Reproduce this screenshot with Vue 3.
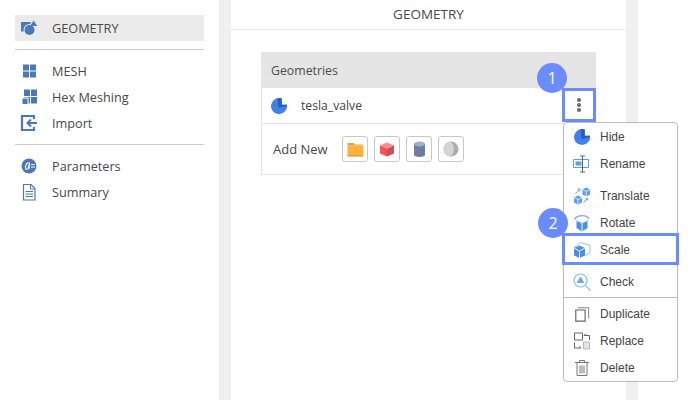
<script setup>
const pieBody = 'M11 .6 A8 8 0 1 0 15.900 6.500 L11 6.500 Z'
const pieDark = 'M6.500 .2 A8 8 0 0 1 10.500 .4 L10.500 7 L15.900 7 L16 8 L7.500 10 Z'
</script>

<template>
  <div class="page">
    <aside class="side">
      <div class="nav active">
        <svg class="ni" width="18" height="16" viewBox="0 0 18 16">
          <path d="M1 2h9.500v9.500H1z" fill="#4a7ab5"/>
          <circle cx="9.500" cy="10" r="6" fill="#ebebeb"/>
          <circle cx="9.500" cy="10" r="5" fill="#4a7ab5"/>
          <path d="M13.500 0.500l3.800 5.500h-7z" fill="#4a7ab5"/>
        </svg>
        <span>GEOMETRY</span>
      </div>
      <hr class="rule">
      <div class="nav">
        <svg class="ni" width="18" height="16" viewBox="0 0 18 16">
          <path d="M3 1.500h6v6H3zM10 1.500h6v6h-6zM3 8.500h6v6H3zM10 8.500h6v6h-6z" fill="#4a7ab5"/>
        </svg>
        <span>MESH</span>
      </div>
      <div class="nav">
        <svg class="ni" width="18" height="16" viewBox="0 0 18 16">
          <path d="M4 0.500h6v6.500H4zM11 0.500h6v6.500h-6zM11 8h6v6.500h-6zM4 8h6v6.500H4z" fill="#4a7ab5"/>
          <path d="M2 9h6v6.500H2z" fill="#4a7ab5" stroke="#fff"/>
        </svg>
        <span>Hex Meshing</span>
      </div>
      <div class="nav">
        <svg class="ni" width="18" height="18" viewBox="0 0 18 18">
          <path d="M14 5V2H2v14h12v-3" fill="none" stroke="#4a7ab5" stroke-width="2.200"/>
          <path d="M17 9H8M11 5.500L7.500 9l3.500 3.500" fill="none" stroke="#4a7ab5" stroke-width="2"/>
        </svg>
        <span>Import</span>
      </div>
      <hr class="rule">
      <div class="nav">
        <svg class="ni" width="18" height="16" viewBox="0 0 18 16">
          <circle cx="9" cy="8" r="7.500" fill="#4a7ab5"/>
          <path d="M8.500 4.500C5.500 5 4.500 11.500 6.500 11.500c1.500 0 2.500-4 3-7l-.5 6.500" fill="none" stroke="#fff" stroke-width="1.100"/>
          <path d="M11 6.500h4M11 9h4" stroke="#fff"/>
        </svg>
        <span>Parameters</span>
      </div>
      <div class="nav">
        <svg class="ni" width="18" height="18" viewBox="0 0 18 18">
          <path d="M3.500 1.500h7.500l4 4v11.500H3.500z" fill="none" stroke="#4a7ab5" stroke-width="1.200"/>
          <path d="M10.500 1.500v4.500H15M5.500 8.500h7.500M5.500 11h7.500M5.500 13.500h7.500" fill="none" stroke="#4a7ab5"/>
        </svg>
        <span>Summary</span>
      </div>
    </aside>

    <main class="panel">
      <h1 class="title">GEOMETRY</h1>
      <section class="card">
        <header class="card-head">Geometries</header>
        <div class="geo-row">
          <svg class="pie" width="16" height="16" viewBox="0 0 16 16">
            <path :d="pieBody" fill="#3f80ea"/>
            <path :d="pieDark" fill="#2a5cb4"/>
          </svg>
          <span class="geo-name">tesla_valve</span>
          <button class="kebab" type="button" aria-label="More"><i></i><i></i><i></i></button>
          <span class="badge badge-one">1</span>
        </div>
        <div class="add-row">
          <span class="add-label">Add New</span>
          <button class="tool" type="button" aria-label="Folder">
            <svg width="17" height="15" viewBox="0 0 17 15">
              <path d="M0.500 2.500V1h6l1.500 1.500h8v1H.5z" fill="#e0a23c"/>
              <path d="M0.500 3.500h16v10.500H.5z" fill="#ffb13d"/>
              <path d="M0.500 13.500h16V14.500H.5z" fill="#d28c25"/>
            </svg>
          </button>
          <button class="tool" type="button" aria-label="Box">
            <svg width="16" height="15" viewBox="0 0 16 15">
              <path d="M8 0.500l7 3-7 3.300-7-3.300z" fill="#ff8a8e"/>
              <path d="M1 3.500l7 3.300V14.500L1 11.500z" fill="#fa5158"/>
              <path d="M15 3.500L8 6.800V14.500l7-3z" fill="#c05458"/>
            </svg>
          </button>
          <button class="tool" type="button" aria-label="Cylinder">
            <svg width="13" height="17" viewBox="0 0 13 17">
              <path d="M1 3v11c0 2.500 11 2.500 11 0V3z" fill="#6d7f9c"/>
              <ellipse cx="6.500" cy="3" rx="5.500" ry="2.500" fill="#9cb1d0"/>
            </svg>
          </button>
          <button class="tool" type="button" aria-label="Sphere">
            <svg width="16" height="16" viewBox="0 0 16 16">
              <circle cx="8" cy="8" r="7.500" fill="#adadad"/>
              <path d="M8 .5A7.500 7.500 0 0 0 8 15.500A11 11 0 0 0 8 .5z" fill="#d4d4d4"/>
            </svg>
          </button>
        </div>
      </section>

      <div class="menu">
        <div class="item">
          <svg width="18" height="18" viewBox="-1 -1 18 18">
            <path :d="pieBody" fill="#3f80ea"/>
            <path :d="pieDark" fill="#2a5cb4"/>
          </svg>
          <span>Hide</span>
        </div>
        <div class="item">
          <svg width="18" height="18" viewBox="0 0 18 18">
            <path d="M.5 4.500h15v8H.5z" fill="none" stroke="#5b9cf0"/>
            <path d="M2.500 6.500h6v4h-6z" fill="#5b9cf0"/>
            <path d="M9.500 1v16M7 1h5M7 17h5" fill="none" stroke="#666"/>
          </svg>
          <span>Rename</span>
        </div>
        <div class="item gap">
          <svg width="18" height="18" viewBox="0 0 18 18">
            <path d="M9.500 2.500l3.700-2 3.800 2v5l-3.800 2-3.700-2zM1 10.500l4-2 4 2v5l-4 2-4-2z" fill="#5b9cf0"/>
            <path d="M9.500 2.500l3.700 2 3.800-2M13.200 4.500v5M1 10.500l4 2 4-2M5 12.500v5" fill="none" stroke="#fff" stroke-width=".8"/>
            <path d="M2.500 6.500L7 2M4.500 2H7v2.500M10.500 15.500l4-4M14.500 13.500v-2h-2" fill="none" stroke="#5b9cf0" stroke-width=".9"/>
          </svg>
          <span>Translate</span>
        </div>
        <div class="item">
          <svg width="18" height="18" viewBox="0 0 18 18">
            <path d="M3.500 6l5.500 2.500L14.500 6v8l-5.500 3.500-5.500-3.500z" fill="#4a8fe6"/>
            <path d="M3.500 6.500L9 9l5.500-2.500M9 9v8" fill="none" stroke="#fff" stroke-width=".9"/>
            <path d="M1.500 5.500C3 1 13.500 0 16 5" fill="none" stroke="#7ab0ee" stroke-width="1.400"/>
          </svg>
          <span>Rotate</span>
        </div>
        <div class="item scale">
          <svg width="18" height="18" viewBox="0 0 18 18">
            <path d="M1 7l5.500-2.500L12 7v7.500L6.500 17 1 14.500z" fill="#4a8fe6"/>
            <path d="M1 7l5.500 3L12 7M6.500 10v7" fill="none" stroke="#fff" stroke-width=".9"/>
            <path d="M1 7l6.500-5.500L17 4.500v7L12 15" fill="none" stroke="#7ab0ee" stroke-width=".8"/>
          </svg>
          <span>Scale</span>
          <span class="badge badge-two">2</span>
        </div>
        <div class="item gap">
          <svg width="18" height="18" viewBox="0 0 18 18">
            <circle cx="7.500" cy="7.500" r="6.500" fill="none" stroke="#8abcf7" stroke-width="1.200"/>
            <path d="M7.500 3.500l4 6.500h-8z" fill="#6ba6f2"/>
            <path d="M12.500 12.500l5 5" stroke="#8abcf7" stroke-width="1.200"/>
          </svg>
          <span>Check</span>
        </div>
        <hr class="menu-rule">
        <div class="item">
          <svg width="16" height="16" viewBox="-1 -1 18 18">
            <path d="M1 3.500h10.500V16H1z" fill="none" stroke="#666" stroke-width="1.300"/>
            <path d="M3.500 1h12v12" fill="none" stroke="#777"/>
          </svg>
          <span>Duplicate</span>
        </div>
        <div class="item">
          <svg width="18" height="18" viewBox="0 0 18 18">
            <path d="M1.500 1h8v7h-8z" fill="none" stroke="#666"/>
            <path d="M10.500 10h6v7h-6z" fill="#e4e4e4" stroke="#bbb"/>
            <path d="M11 3.500h5.500V8M11 3.500l2-2M1.500 10.500V16H8M8 16l-2-1.500" fill="none" stroke="#666"/>
          </svg>
          <span>Replace</span>
        </div>
        <div class="item">
          <svg width="14" height="16" viewBox="0 0 14 16">
            <path d="M0 2.500h14M4.500 2.500V.5h5v2M2 3v12.500h10V3M5 5.500v8M7 5.500v8M9 5.500v8" fill="none" stroke="#777"/>
          </svg>
          <span>Delete</span>
        </div>
      </div>
    </main>
  </div>
</template>

<style scoped>
.page {
  display: flex;
  width: 700px;
  height: 400px;
  overflow: hidden;
  background: #fff;
  color: #444;
}
.side {
  box-sizing: border-box;
  width: 219px;
  padding: 15px 15px 0;
  font: 12.700px "Open Sans", sans-serif;
}
.nav {
  display: flex;
  align-items: center;
  height: 26px;
  padding-left: 5px;
  gap: 14px;
  color: #484848;
}
.nav.active {
  background: #ebebeb;
}
.ni {
  flex: none;
  width: 18px;
}
.rule {
  height: 1px;
  margin: 8px 0;
  border: 0;
  background: #ccc;
}
.panel {
  position: relative;
  box-sizing: border-box;
  width: 419px;
  height: 400px;
  border-left: 12px solid #f0f0f0;
  border-right: 12px solid #f0f0f0;
  font-family: "Open Sans", sans-serif;
}
.title {
  box-sizing: border-box;
  height: 30px;
  margin: 0;
  border-bottom: 1px solid #e4e4e4;
  text-align: center;
  font-size: 13.500px;
  font-weight: 400;
  line-height: 28px;
  color: #484848;
}
.card {
  margin: 22px 30px 0;
  border-left: 1px solid #e5e5e5;
}
.card-head {
  box-sizing: border-box;
  height: 36px;
  padding-left: 9px;
  background: #e5e5e5;
  font-size: 12.300px;
  line-height: 37px;
  color: #4d4d4d;
}
.geo-row {
  position: relative;
  display: flex;
  box-sizing: border-box;
  align-items: center;
  height: 36px;
  padding-left: 9px;
  border-bottom: 1px solid #e5e5e5;
  font-size: 12.200px;
}
.pie {
  flex: none;
}
.geo-name {
  margin-left: 14px;
  color: #444;
}
.kebab {
  display: flex;
  flex-direction: column;
  align-items: center;
  justify-content: center;
  gap: 1.700px;
  box-sizing: border-box;
  width: 34px;
  height: 34px;
  margin-left: auto;
  align-self: flex-start;
  padding: 0;
  border: 3px solid #6a8cff;
  background: #fff;
}
.kebab i {
  width: 3.600px;
  height: 3.600px;
  border-radius: 50%;
  background: #707070;
}
.add-row {
  display: flex;
  align-items: center;
  box-sizing: border-box;
  height: 51px;
  padding-left: 11px;
  gap: 6px;
  border-bottom: 1px solid #e5e5e5;
}
.add-label {
  width: 63px;
  font-size: 13px;
  color: #484848;
}
.tool {
  display: flex;
  align-items: center;
  justify-content: center;
  box-sizing: border-box;
  width: 26px;
  height: 26px;
  padding: 0;
  border: 1px solid #c8c8c8;
  border-radius: 3px;
  background: #fff;
}
.badge {
  position: absolute;
  display: flex;
  align-items: center;
  justify-content: center;
  box-sizing: border-box;
  width: 30px;
  height: 30px;
  border-radius: 50%;
  background: #6a8cff;
  color: #fff;
  font: 16px "Open Sans", sans-serif;
  z-index: 3;
}
.badge-one {
  top: -25px;
  right: 29px;
}
.badge-two {
  top: -28px;
  left: -26px;
}
.menu {
  position: absolute;
  top: 122px;
  left: 332px;
  box-sizing: border-box;
  width: 115px;
  height: 260px;
  border: 1px solid #bbb;
  border-radius: 4px;
  background: #fff;
  font: 12px "Liberation Sans", sans-serif;
  color: #444;
  z-index: 2;
}
.item {
  position: relative;
  display: flex;
  align-items: center;
  height: 27px;
  padding-left: 9px;
}
.item svg {
  flex: none;
  width: 18px;
  margin-right: 9px;
}
.item.gap {
  margin-top: 5px;
}
.scale::after {
  content: "";
  position: absolute;
  top: -3px;
  right: -2px;
  bottom: -2px;
  left: -2px;
  border: 3px solid #6a8cff;
}
.menu-rule {
  height: 1px;
  margin: 2px 0 2px;
  border: 0;
  background: #bbb;
}
</style>
